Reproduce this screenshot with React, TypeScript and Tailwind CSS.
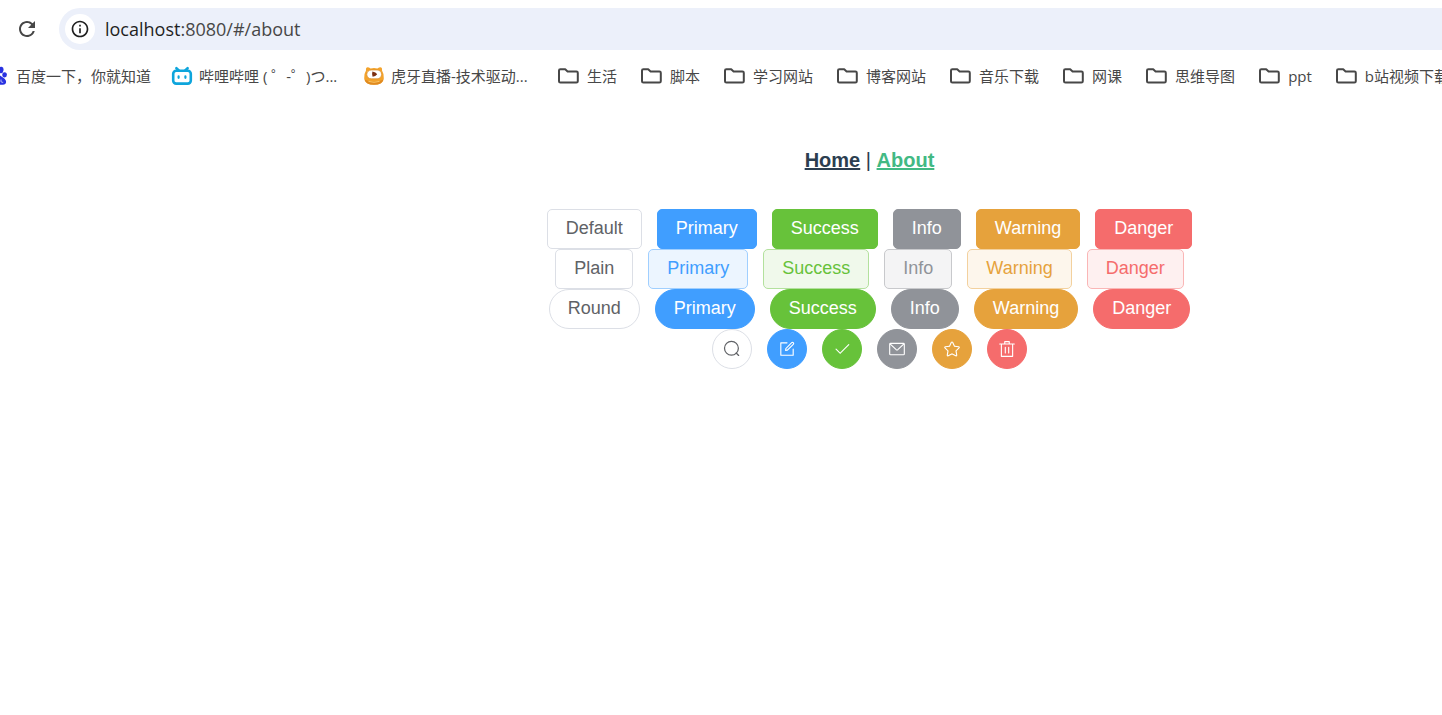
import type { ReactNode } from "react";
import clsx from "clsx";
import { MdInfoOutline, MdRefresh } from "react-icons/md";

const folders = ["生活", "脚本", "学习网站", "博客网站", "音乐下载", "网课", "思维导图", "ppt", "b站视频下载"];

type Button = { label: string; tone: string };

const solid: Button[] = [
  { label: "Primary", tone: "border-[#409eff] bg-[#409eff] text-white" },
  { label: "Success", tone: "border-[#67c23a] bg-[#67c23a] text-white" },
  { label: "Info", tone: "border-[#909399] bg-[#909399] text-white" },
  { label: "Warning", tone: "border-[#e6a23c] bg-[#e6a23c] text-white" },
  { label: "Danger", tone: "border-[#f56c6c] bg-[#f56c6c] text-white" },
];

const plain: Button[] = [
  { label: "Primary", tone: "border-[#a0cfff] bg-[#ecf5ff] text-[#409eff]" },
  { label: "Success", tone: "border-[#b3e19d] bg-[#f0f9eb] text-[#67c23a]" },
  { label: "Info", tone: "border-[#c8c9cc] bg-[#f4f4f5] text-[#909399]" },
  { label: "Warning", tone: "border-[#f3d19e] bg-[#fdf6ec] text-[#e6a23c]" },
  { label: "Danger", tone: "border-[#fab6b6] bg-[#fef0f0] text-[#f56c6c]" },
];

const neutral = "border-[#dcdfe6] bg-white text-[#606266]";

const rows: { name: string; shape: string; buttons: Button[] }[] = [
  { name: "default", shape: "rounded-[5px]", buttons: [{ label: "Default", tone: neutral }, ...solid] },
  { name: "plain", shape: "rounded-[5px]", buttons: [{ label: "Plain", tone: neutral }, ...plain] },
  { name: "round", shape: "rounded-full", buttons: [{ label: "Round", tone: neutral }, ...solid] },
];

function Glyph({ children }: { children: ReactNode }) {
  return (
    <svg viewBox="0 0 1024 1024" className="size-[18px]" fill="currentColor" aria-hidden="true">
      {children}
    </svg>
  );
}

const iconButtons: { name: string; tone: string; icon: ReactNode }[] = [
  {
    name: "Search",
    tone: neutral,
    icon: (
      <g fill="none" stroke="currentColor" strokeWidth="70">
        <circle cx="480" cy="470" r="394" />
        <path d="M752 742 890 880" strokeLinecap="round" />
      </g>
    ),
  },
  {
    name: "Edit",
    tone: solid[0].tone,
    icon: (
      <>
        <path d="M832 512a32 32 0 1 1 64 0v352a32 32 0 0 1-32 32H160a32 32 0 0 1-32-32V160a32 32 0 0 1 32-32h352a32 32 0 0 1 0 64H192v640h640V512z" />
        <path d="m469.952 554.24 52.8-7.552L847.104 222.4a32 32 0 1 0-45.248-45.248L477.44 501.44l-7.552 52.8zm422.4-422.4a96 96 0 0 1 0 135.808l-331.84 331.84a32 32 0 0 1-18.112 9.088L436.8 623.68a32 32 0 0 1-36.224-36.224l15.104-105.6a32 32 0 0 1 9.024-18.112l331.904-331.84a96 96 0 0 1 135.744 0z" />
      </>
    ),
  },
  {
    name: "Confirm",
    tone: solid[1].tone,
    icon: (
      <path d="M406.656 706.944 195.84 496.256a32 32 0 1 0-45.248 45.248l256 256 512-512a32 32 0 0 0-45.248-45.248L406.592 706.944z" />
    ),
  },
  {
    name: "Message",
    tone: solid[2].tone,
    icon: (
      <g fill="none" stroke="currentColor" strokeWidth="64" strokeLinejoin="round">
        <rect x="96" y="192" width="832" height="648" rx="50" />
        <path d="m116 222 350 330q46 38 92 0l350-330" />
      </g>
    ),
  },
  {
    name: "Favorite",
    tone: solid[3].tone,
    icon: (
      <path d="m512 747.84 228.16 119.936a6.4 6.4 0 0 0 9.28-6.72l-43.52-254.08 184.512-179.904a6.4 6.4 0 0 0-3.52-10.88l-255.104-37.12L517.76 147.904a6.4 6.4 0 0 0-11.52 0L392.192 379.072l-255.104 37.12a6.4 6.4 0 0 0-3.52 10.88L318.08 606.976l-43.584 254.08a6.4 6.4 0 0 0 9.28 6.72L512 747.84zM313.6 924.48a70.4 70.4 0 0 1-102.144-74.24l37.888-220.928L88.96 472.96A70.4 70.4 0 0 1 128 352.896l221.76-32.256 99.2-200.96a70.4 70.4 0 0 1 126.208 0l99.2 200.96 221.824 32.256a70.4 70.4 0 0 1 39.04 120.064L774.72 629.376l37.888 220.928a70.4 70.4 0 0 1-102.144 74.24L512 820.096l-198.4 104.32z" />
    ),
  },
  {
    name: "Delete",
    tone: solid[4].tone,
    icon: (
      <path d="M160 256H96a32 32 0 0 1 0-64h256V95.936a32 32 0 0 1 32-32h256a32 32 0 0 1 32 32V192h256a32 32 0 1 1 0 64h-64v672a32 32 0 0 1-32 32H192a32 32 0 0 1-32-32V256zm448-64v-64H416v64h192zM224 896h576V256H224v640zm192-128a32 32 0 0 1-32-32V416a32 32 0 0 1 64 0v320a32 32 0 0 1-32 32zm192 0a32 32 0 0 1-32-32V416a32 32 0 0 1 64 0v320a32 32 0 0 1-32 32z" />
    ),
  },
];

function FolderIcon() {
  return (
    <svg viewBox="0 0 22 16" className="h-4 w-[22px] shrink-0" fill="none" stroke="#474747" strokeWidth="2" aria-hidden="true">
      <path d="M2 13.2V2.6Q2 1.2 3.4 1.2H8.2L10.6 3.4H19.4Q20.8 3.4 20.8 4.8V13.2Q20.8 14.5 19.4 14.5H3.4Q2 14.5 2 13.2Z" strokeLinejoin="round" />
    </svg>
  );
}

function PawIcon() {
  return (
    <svg viewBox="0 0 20 20" className="size-5 shrink-0" fill="#2932e1" aria-hidden="true">
      <ellipse cx="7.4" cy="4" rx="2.1" ry="3" />
      <ellipse cx="14" cy="4" rx="2.5" ry="3.2" transform="rotate(10 14 4)" />
      <ellipse cx="3" cy="8.5" rx="2.1" ry="2.8" />
      <ellipse cx="17.6" cy="8.8" rx="2.3" ry="2.6" />
      <path d="M10.2 8.6C8 8.6 7.4 10.8 5.8 12.2 4 13.8 3.4 15.2 4 17c.8 2.4 3.6 1.6 6.2 1.6s7.6 1 8.6-1.4c.8-2-.2-3.4-1.8-4.9-1.7-1.5-4.4-3.7-6.8-3.7Z" />
      <path d="M14 13.5v1.8q0 1 1.2 1h1" fill="none" stroke="#fff" strokeWidth=".7" />
    </svg>
  );
}

function TvIcon() {
  return (
    <svg viewBox="0 0 22 20" className="h-5 w-[22px] shrink-0" fill="none" stroke="#0ea5dc" strokeLinecap="round" aria-hidden="true">
      <path d="m5.4 2.2 2.4 2.2M16.6 2.2 14.2 4.4" strokeWidth="2.6" />
      <rect x="2.2" y="4.8" width="17.6" height="12.8" rx="3" strokeWidth="2.6" />
      <path d="M7.6 10.4v1.4M14.4 10.4v1.4" strokeWidth="2.2" />
    </svg>
  );
}

function TigerIcon() {
  return (
    <svg viewBox="0 0 22 20" className="h-5 w-[22px] shrink-0" aria-hidden="true">
      <path d="M3 4.5Q2.6 1 5 1.2q1.6.2 2.6 1.2 3.4-.8 6.8 0Q15.4 1.4 17 1.2q2.4-.2 2 3.3 2.3 3.7 1.8 8Q20 18.800 11 18.8T1.2 12.5Q.7 8.2 3 4.5Z" fill="#f3a32c" />
      <path d="M1.4 13.5Q3 18.8 11 18.8t9.6-5.3Q17 15.4 11 15.4T1.4 13.5Z" fill="#e08a20" />
      <rect x="3.8" y="4" width="14.8" height="8.8" rx="4.4" fill="#fff" stroke="#d98a2a" strokeWidth=".7" />
      <path d="M9.4 5.4q3.6.6 4.8 2.8-1.600 2-4.6 2.600-1-2.600-.2-5.400Z" fill="#7c2f12" />
      <path d="M5.5 15.4q5.5 1.800 11 0" stroke="#fbc765" strokeWidth="1" fill="none" />
    </svg>
  );
}

function Bookmark({ icon, label, className }: { icon: ReactNode; label: string; className: string }) {
  return (
    <a href="#/about" className={clsx("flex shrink-0 items-center whitespace-nowrap", className)}>
      {icon}
      <span>{label}</span>
    </a>
  );
}

export default function App() {
  return (
    <div className="overflow-hidden bg-white">
      <header className="font-['Open_Sans','Noto_Sans_CJK_SC',sans-serif] text-[#474747]">
        <div className="flex items-center pt-2 pl-[15px]">
          <button type="button" aria-label="Reload" className="mr-5 text-[#474747]">
            <MdRefresh className="size-6" />
          </button>
          <div className="flex h-[42px] flex-1 items-center rounded-l-full bg-[#ecf0fa] pl-1.5">
            <button
              type="button"
              aria-label="Site information"
              className="flex size-[30px] items-center justify-center rounded-full bg-white text-[#1f1f1f]"
            >
              <MdInfoOutline className="size-5" />
            </button>
            <a href="#/about" className="ml-2.5 text-[18px] leading-6 text-[#474747]">
              <span className="text-[#1f1f1f]">localhost</span>:8080/#/about
            </a>
          </div>
        </div>
        <nav aria-label="Bookmarks" className="-ml-[13px] flex h-[52px] items-center text-[15px] leading-5">
          <Bookmark className="mr-5 gap-[9px]" icon={<PawIcon />} label="百度一下，你就知道" />
          <Bookmark className="w-[192px] gap-1.5" icon={<TvIcon />} label="哔哩哔哩 ( ゜-゜)つ..." />
          <Bookmark className="w-[194px] gap-1.5" icon={<TigerIcon />} label="虎牙直播-技术驱动..." />
          {folders.map((name) => (
            <Bookmark key={name} className="mr-[23px] gap-2" icon={<FolderIcon />} label={name} />
          ))}
        </nav>
      </header>

      <main className="flex flex-col items-center pt-11 pl-[297px] font-['Liberation_Sans',Arial,sans-serif]">
        <nav aria-label="Main" className="text-[20px] leading-7 text-[#2c3e50]">
          <a href="#/" className="font-bold underline">
            Home
          </a>{" "}
          |{" "}
          <a href="#/about" aria-current="page" className="font-bold text-[#42b983] underline">
            About
          </a>
        </nav>
        <div className="mt-[35px] flex flex-col items-center">
          {rows.map((row) => (
            <div key={row.name} className="flex gap-[15px]">
              {row.buttons.map((button) => (
                <button
                  key={button.label}
                  type="button"
                  className={clsx(
                    "flex h-10 items-center border px-[18px] pb-0.5 text-[18px] leading-5",
                    row.shape,
                    button.tone,
                  )}
                >
                  {button.label}
                </button>
              ))}
            </div>
          ))}
          <div className="flex gap-[15px]">
            {iconButtons.map((button) => (
              <button
                key={button.name}
                type="button"
                aria-label={button.name}
                className={clsx("flex size-10 items-center justify-center rounded-full border", button.tone)}
              >
                <Glyph>{button.icon}</Glyph>
              </button>
            ))}
          </div>
        </div>
      </main>
    </div>
  );
}
